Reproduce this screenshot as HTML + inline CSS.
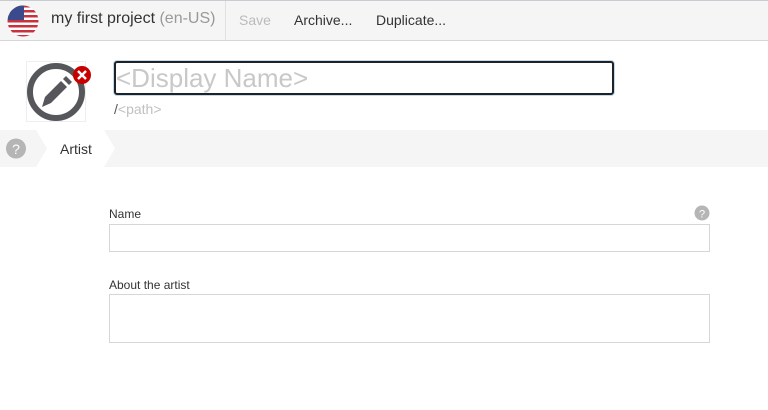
<!DOCTYPE html><html><head><style>
body{margin:0;width:768px;height:410px;background:#fff;font-family:"Liberation Sans",sans-serif;position:relative;overflow:hidden}
.a{position:absolute}
</style></head><body>
<div class="a" style="left:0;top:0;width:768px;height:41px;background:#f5f5f5;border-top:1px solid #c8cbd0;border-bottom:1px solid #d6d6d6;box-sizing:border-box"></div>
<svg class="a" style="left:7px;top:5px" width="32" height="32" viewBox="0 0 32 32"><defs><clipPath id="c"><circle cx="16" cy="16" r="15.5"/></clipPath></defs><g clip-path="url(#c)"><rect width="32" height="32" fill="#fff"/><g fill="#c8313e"><rect y="0" width="32" height="2.5"/><rect y="5" width="32" height="2.5"/><rect y="10" width="32" height="2.5"/><rect y="15" width="32" height="2.5"/><rect y="20" width="32" height="2.5"/><rect y="25" width="32" height="2.5"/><rect y="30" width="32" height="2.5"/></g><rect width="17" height="15" fill="#3b4a8c"/></g></svg>
<div class="a" style="left:51px;top:10px;font-size:16px;color:#333">my first project <span style="color:#999">(en-US)</span></div>
<div class="a" style="left:225px;top:1px;width:1px;height:39px;background:#e0e0e0"></div>
<div class="a" style="left:239px;top:12px;font-size:14px;color:#bbb">Save</div>
<div class="a" style="left:294px;top:12px;font-size:14px;color:#333">Archive...</div>
<div class="a" style="left:376px;top:12px;font-size:14px;color:#333">Duplicate...</div>
<div class="a" style="left:26px;top:61px;width:58px;height:59px;border:1px solid #eee"></div>
<svg class="a" style="left:26px;top:61px" width="68" height="60" viewBox="0 0 68 60"><circle cx="30" cy="31" r="26" fill="none" stroke="#55575b" stroke-width="6"/><path d="M16 46 L19 36 L35 20 L41 26 L25 42 Z" fill="#55575b"/><path d="M37 18 L40 15 L46 21 L43 24 Z" fill="#55575b"/><circle cx="56" cy="14" r="9" fill="#c80000"/><path d="M52 10 L60 18 M60 10 L52 18" stroke="#fff" stroke-width="2.5"/></svg>
<div class="a" style="left:114px;top:61px;width:500px;height:34px;border:2px solid #222;border-radius:3px;box-shadow:0 0 0 1px #bcdcf5;box-sizing:border-box"></div>
<div class="a" style="left:116px;top:63px;font-size:26px;color:#c8c8c8">&lt;Display Name&gt;</div>
<div class="a" style="left:114px;top:101px;font-size:14px;color:#555">/<span style="color:#c0c0c0">&lt;path&gt;</span></div>
<div class="a" style="left:0;top:130px;width:768px;height:37px;background:#f5f5f5"></div>
<svg class="a" style="left:0;top:130px" width="130" height="37"><polygon points="36,0 104,0 115,18.5 104,37 36,37 47,18.5" fill="#fff"/><circle cx="16" cy="18.5" r="10" fill="#b5b5b5"/><text x="16" y="24" font-size="14" fill="#fff" text-anchor="middle" font-family="Liberation Sans">?</text></svg>
<div class="a" style="left:60px;top:141px;font-size:14px;color:#333">Artist</div>
<div class="a" style="left:109px;top:207px;font-size:12px;color:#333">Name</div>
<svg class="a" style="left:694px;top:205px" width="16" height="16"><circle cx="8" cy="8" r="7.5" fill="#b5b5b5"/><text x="8" y="12.5" font-size="11" fill="#fff" text-anchor="middle" font-family="Liberation Sans">?</text></svg>
<div class="a" style="left:109px;top:224px;width:601px;height:28px;border:1px solid #d6d6d6;box-sizing:border-box"></div>
<div class="a" style="left:109px;top:278px;font-size:12px;color:#333">About the artist</div>
<div class="a" style="left:109px;top:294px;width:601px;height:49px;border:1px solid #d6d6d6;box-sizing:border-box"></div>
</body></html>
